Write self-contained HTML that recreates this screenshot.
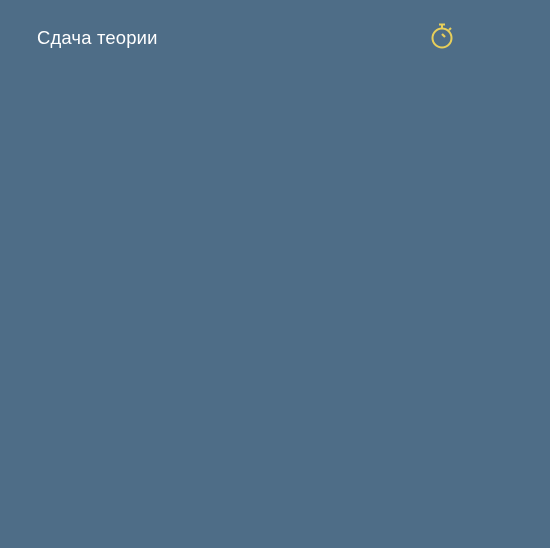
<!DOCTYPE html>
<html><head><meta charset="utf-8"><style>
html,body{margin:0;padding:0;}
body{width:550px;height:548px;background:#4e6d87;position:relative;overflow:hidden;font-family:"Liberation Sans",sans-serif;}
.t{position:absolute;left:37px;top:27px;color:#fff;font-size:18.4px;letter-spacing:0.2px;}
svg{position:absolute;left:430px;top:22px;}
</style></head><body>
<div class="t">Сдача теории</div>
<svg width="26" height="28" viewBox="0 0 26 28">
<g fill="none" stroke="#e8cf5a" stroke-width="2">
<circle cx="12" cy="16" r="9.5"/>
<line x1="12" y1="6.5" x2="12" y2="3"/>
<line x1="9" y1="2.5" x2="15" y2="2.5"/>
<line x1="19" y1="8" x2="21" y2="6"/>
</g>
<line x1="12" y1="12" x2="15" y2="15" stroke="#e8cf5a" stroke-width="2.2"/>
</svg>
</body></html>
